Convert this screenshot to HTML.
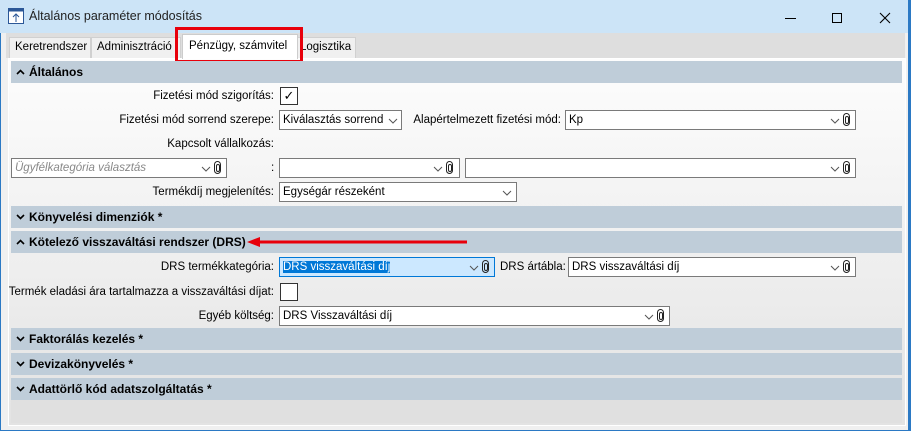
<!DOCTYPE html>
<html><head><meta charset="utf-8"><style>
*{box-sizing:border-box;margin:0;padding:0}
body{width:911px;height:431px;overflow:hidden;background:#fff;font-family:"Liberation Sans",sans-serif;font-size:11.5px;color:#000;position:relative}
.a{position:absolute}
.win{left:0;top:0;width:911px;height:431px;border:1px solid #2b79c4;border-top:none;border-right:3px solid #2b79c4;background:#f0f0f0}
.title{left:0;top:0;width:911px;height:33px;background:#cce4f7}
.tabs{left:6px;top:33px;width:899px;height:25px;background:#dedede}
.tab{top:37px;height:21px;border:1px solid #d0d0d0;border-bottom:none;background:#f0f0f0;padding:3px 5px;white-space:nowrap;overflow:hidden}
.panel{left:8px;top:58px;width:898px;height:368px;background:linear-gradient(#fdfdfd,#e3e3e3);border:1px solid #fff}
.hdr{left:11px;width:891px;height:22px;background:#bfcdd9;font-weight:bold;padding:4px 0 0 18px;font-size:12px}
.hdr svg{position:absolute;left:5px;top:8px}
.lbl{text-align:right;white-space:nowrap}
.sel{height:20px;border:1px solid #7a7a7a;background:#fff;padding:3px 3px;line-height:13px;white-space:nowrap;overflow:hidden}
.chev{position:absolute;top:7px}
.clip{position:absolute;top:2px;width:7px;height:13px;border:1.5px solid #222;border-radius:4px}
.clip:after{content:"";position:absolute;left:1px;top:2px;width:2px;height:6px;border:1px solid #222;border-radius:2px}
.cb{width:18px;height:18px;border:1px solid #333;background:#fff;text-align:center;line-height:16px;font-size:13px}
</style></head><body>
<div class="a win"></div>
<div class="a title" style="width:908px"></div>
<svg class="a" style="left:8px;top:8px" width="16" height="16"><rect x="0.5" y="0.5" width="15" height="15" fill="#fff" stroke="#2b5797"/><rect x="0.5" y="0.5" width="15" height="3" fill="#2b5797"/><path d="M8 14V6M5 9l3-3 3 3" stroke="#2b5797" fill="none"/></svg>
<div class="a" style="left:29px;top:9px;font-size:12.5px;color:#222">Általános paraméter módosítás</div>
<div class="a" style="left:785px;top:18px;width:11px;height:1px;background:#000"></div>
<div class="a" style="left:832px;top:13px;width:10px;height:10px;border:1px solid #000"></div>
<svg class="a" style="left:879px;top:12px" width="12" height="12"><path d="M1 1l10 10M11 1L1 11" stroke="#000" stroke-width="1.1"/></svg>
<div class="a tabs"></div>
<div class="a tab" style="left:9px;width:82px">Keretrendszer</div>
<div class="a tab" style="left:91px;width:90px">Adminisztráció</div>
<div class="a tab" style="left:297px;width:59px;padding-left:2px">Logisztika</div>
<div class="a panel"></div>
<div class="a tab" style="left:182px;top:34px;height:25px;width:116px;background:#fff;border-color:#ccc;padding:5px 6px">Pénzügy, számvitel</div>
<div class="a" style="left:175px;top:27px;width:128px;height:36px;border:3px solid #e8000b"></div>

<div class="a hdr" style="top:61px"><svg width="9" height="6"><path d="M1 5l3.5-3.5L8 5" stroke="#000" stroke-width="1.6" fill="none"/></svg>Általános</div>
<div class="a lbl" style="right:637px;top:90px">Fizetési mód szigorítás:</div>
<div class="a cb" style="left:280px;top:87px">✓</div>
<div class="a lbl" style="right:637px;top:114px">Fizetési mód sorrend szerepe:</div>
<div class="a sel" style="left:279px;top:110px;width:123px">Kiválasztás sorrend<svg class="chev" style="left:108px" width="10" height="6"><path d="M1 1l4 4 4-4" stroke="#555" fill="none"/></svg></div>
<div class="a lbl" style="right:350px;top:114px">Alapértelmezett fizetési mód:</div>
<div class="a sel" style="left:565px;top:110px;width:291px">Kp<svg class="chev" style="left:264px" width="10" height="6"><path d="M1 1l4 4 4-4" stroke="#555" fill="none"/></svg><span class="clip" style="left:277px"></span></div>
<div class="a lbl" style="right:637px;top:138px">Kapcsolt vállalkozás:</div>
<div class="a sel" style="left:11px;top:158px;width:216px;color:#888;font-style:italic">Ügyfélkategória választás<svg class="chev" style="left:189px" width="10" height="6"><path d="M1 1l4 4 4-4" stroke="#555" fill="none"/></svg><span class="clip" style="left:202px"></span></div>
<div class="a" style="left:271px;top:162px">:</div>
<div class="a sel" style="left:279px;top:158px;width:181px"><svg class="chev" style="left:153px" width="10" height="6"><path d="M1 1l4 4 4-4" stroke="#555" fill="none"/></svg><span class="clip" style="left:166px"></span></div>
<div class="a sel" style="left:465px;top:158px;width:391px"><svg class="chev" style="left:364px" width="10" height="6"><path d="M1 1l4 4 4-4" stroke="#555" fill="none"/></svg><span class="clip" style="left:377px"></span></div>
<div class="a lbl" style="right:637px;top:186px">Termékdíj megjelenítés:</div>
<div class="a sel" style="left:279px;top:182px;width:238px">Egységár részeként<svg class="chev" style="left:222px" width="10" height="6"><path d="M1 1l4 4 4-4" stroke="#555" fill="none"/></svg></div>

<div class="a hdr" style="top:206px"><svg width="9" height="6"><path d="M1 1l3.5 3.5L8 1" stroke="#000" stroke-width="1.6" fill="none"/></svg>Könyvelési dimenziók *</div>
<div class="a hdr" style="top:231px"><svg width="9" height="6"><path d="M1 5l3.5-3.5L8 5" stroke="#000" stroke-width="1.6" fill="none"/></svg>Kötelező visszaváltási rendszer (DRS)</div>
<svg class="a" style="left:245px;top:235px" width="225" height="14"><path d="M10 7H222" stroke="#e8000b" stroke-width="3"/><path d="M2 7l13-5v10z" fill="#e8000b"/></svg>
<div class="a lbl" style="right:637px;top:261px">DRS termékkategória:</div>
<div class="a sel" style="left:279px;top:257px;width:216px;background:#cce8ff;border-color:#0078d7"><span style="background:#0078d7;color:#fff">DRS visszaváltási díj</span><svg class="chev" style="left:189px" width="10" height="6"><path d="M1 1l4 4 4-4" stroke="#555" fill="none"/></svg><span class="clip" style="left:202px"></span></div>
<div class="a" style="left:500px;top:261px">DRS ártábla:</div>
<div class="a sel" style="left:568px;top:257px;width:288px">DRS visszaváltási díj<svg class="chev" style="left:261px" width="10" height="6"><path d="M1 1l4 4 4-4" stroke="#555" fill="none"/></svg><span class="clip" style="left:274px"></span></div>
<div class="a lbl" style="right:637px;top:286px">Termék eladási ára tartalmazza a visszaváltási díjat:</div>
<div class="a cb" style="left:280px;top:283px"></div>
<div class="a lbl" style="right:637px;top:310px">Egyéb költség:</div>
<div class="a sel" style="left:279px;top:306px;width:391px">DRS Visszaváltási díj<svg class="chev" style="left:364px" width="10" height="6"><path d="M1 1l4 4 4-4" stroke="#555" fill="none"/></svg><span class="clip" style="left:377px"></span></div>

<div class="a hdr" style="top:328px"><svg width="9" height="6"><path d="M1 1l3.5 3.5L8 1" stroke="#000" stroke-width="1.6" fill="none"/></svg>Faktorálás kezelés *</div>
<div class="a hdr" style="top:353px"><svg width="9" height="6"><path d="M1 1l3.5 3.5L8 1" stroke="#000" stroke-width="1.6" fill="none"/></svg>Devizakönyvelés *</div>
<div class="a hdr" style="top:378px"><svg width="9" height="6"><path d="M1 1l3.5 3.5L8 1" stroke="#000" stroke-width="1.6" fill="none"/></svg>Adattörlő kód adatszolgáltatás *</div>
<div class="a" style="left:11px;top:400px;width:891px;height:23px;background:#e0e0e0"></div>
</body></html>
